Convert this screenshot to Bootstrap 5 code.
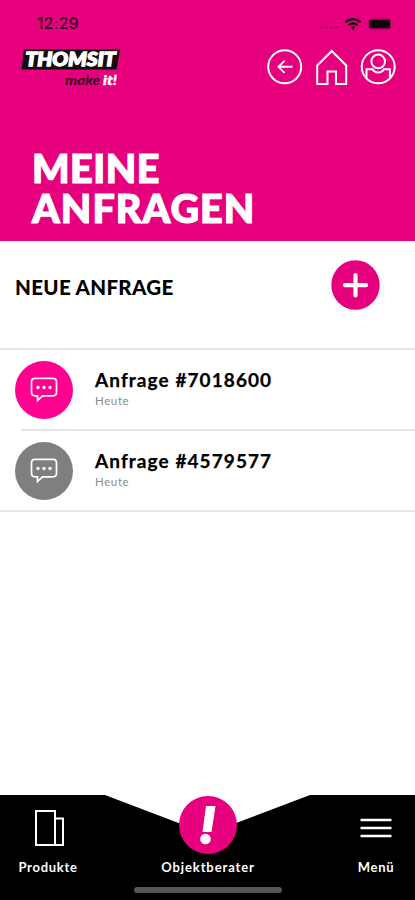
<!DOCTYPE html>
<html lang="de">
<head>
<meta charset="utf-8">
<meta name="viewport" content="width=device-width, initial-scale=1">
<title>Meine Anfragen</title>
<link href="https://cdn.jsdelivr.net/npm/bootstrap@5.3.0/dist/css/bootstrap.min.css" rel="stylesheet">
<style>
:root { --brand: #e6007e; }
body { font-family: Lato, "Liberation Sans", sans-serif; color: #000; }
svg { display: block; flex: none; }
.app { height: 900px; max-width: 415px; }
.hero { height: 241px; background: var(--brand); }
.statusbar { height: 44px; padding: 3px 20px 0 37px; }
.clock { font: 500 15.5px/1 Inter, sans-serif; color: #35001f; letter-spacing: .35px; }
.brandbar { height: 45px; padding: 0 18px 0 20px; }
.hero-title { font-size: 39.5px; line-height: 39.5px; font-weight: 900; padding: 59px 0 0 32px; -webkit-text-stroke: 1.2px #fff; }
.t1 { letter-spacing: .5px; }
.t2 { letter-spacing: 1.05px; }
.new-request { height: 107px; padding: 19px 35px 0 15px; }
.new-title { font-size: 20.5px; line-height: 24px; font-weight: 900; padding-top: 15px; letter-spacing: .33px; }
.request { height: 81px; padding-left: 15px; }
.request-older { padding-top: 2px; }
.rule { border-top: 2px solid #e6e6e6; }
.rule-inset { position: absolute; top: 0; left: 21px; right: 0; }
.bubble { width: 58px; height: 58px; background: #7f7f7f; }
.bubble-new { background: #ff0090; }
.request-text { margin-left: 22px; padding-bottom: 3px; }
.request-name { font-size: 19px; line-height: 22px; font-weight: 700; letter-spacing: 1.08px; -webkit-text-stroke: .25px #000; }
.request-day { font-size: 11.5px; line-height: 14px; color: #8c8c8c; letter-spacing: .6px; margin-top: 3px; }
.tabbar { height: 105px; }
.tabbar-shape { position: absolute; inset: 0; }
.tabs { padding: 0 1px 0 10px; }
.tab { color: #fff; font-size: 13px; line-height: 16px; font-weight: 700; padding-bottom: 25px; letter-spacing: .7px; }
.tab-side { width: 76px; }
.tab-main { margin-right: 8px; letter-spacing: .9px; }
.tab svg { margin-bottom: 12px; }
.tab-main svg { margin-bottom: 4px; }
.home-indicator { position: absolute; left: 134px; bottom: 7px; width: 148px; height: 6px; background: #555; }
</style>
</head>
<body>
<div class="app d-flex flex-column bg-white position-relative overflow-hidden">
  <header class="hero text-white">
    <div class="statusbar d-flex align-items-center justify-content-between">
      <span class="clock">12:29</span>
      <svg width="78" height="16" viewBox="0 0 78 16">
        <g fill="#8f0050" opacity=".7"><rect x="3" y="10.500" width="3" height="2"/><rect x="8" y="10.500" width="3" height="2"/><rect x="13" y="10.500" width="3" height="2"/><rect x="18" y="10.500" width="3" height="2"/></g>
        <g fill="none" stroke="#16000c" stroke-width="2.200"><path d="M28.500 6.200a10.600 10.600 0 0 1 15 0"/><path d="M31.500 9.200a6.400 6.400 0 0 1 9 0"/></g>
        <path d="M33.600 11.200a3.600 3.600 0 0 1 4.800 0L36 14z" fill="#16000c"/>
        <rect x="52" y="3.200" width="21.500" height="9.600" rx="2" fill="#16000c" stroke="#9c0058"/>
        <path d="M75 6.200q2 1.800 0 3.600z" fill="#9c0058"/>
      </svg>
    </div>
    <div class="brandbar d-flex align-items-center justify-content-between">
      <svg width="102" height="44" viewBox="0 0 102 44" font-family="Lato, sans-serif" font-style="italic">
        <path d="M4 4.500H100L96.500 24.500H1.500z" fill="#120a0e"/>
        <text x="5.500" y="20.500" font-size="18" font-weight="900" fill="#fff" stroke="#fff" stroke-width="1.300" textLength="90" lengthAdjust="spacingAndGlyphs">THOMSIT</text>
        <text x="45" y="39.500" font-size="13" font-weight="700" fill="#30001b" textLength="35" lengthAdjust="spacingAndGlyphs">make</text>
        <text x="83" y="39.500" font-size="14" font-weight="900" fill="#fff" stroke="#fff" stroke-width=".4" textLength="14" lengthAdjust="spacingAndGlyphs">it!</text>
      </svg>
      <svg width="130" height="38" viewBox="0 0 130 38" fill="none" stroke="#fff" stroke-width="2">
        <circle cx="17.700" cy="18.800" r="16.500"/>
        <path d="M25.500 18.800H12M17.500 12.800l-6 6 6 6" stroke-width="1.900"/>
        <path d="M50.200 36V17.500L64.700 3l14.500 14.500V36H69V23.500h-8.500V36z"/>
        <circle cx="111.200" cy="18.800" r="16.500"/>
        <circle cx="111.200" cy="13.400" r="6.800"/>
        <path d="M99.500 29.500V21.200h6q2 3.300 5.700 3.300t5.700-3.300h6v8.300"/>
      </svg>
    </div>
    <h1 class="hero-title mb-0"><span class="t1">MEINE</span><br><span class="t2">ANFRAGEN</span></h1>
  </header>

  <section class="new-request d-flex align-items-start justify-content-between">
    <h2 class="new-title mb-0">NEUE ANFRAGE</h2>
    <svg width="49" height="50" viewBox="0 0 49 50"><ellipse cx="24.500" cy="25" rx="24.200" ry="24.800" fill="#e6007e"/><path d="M24.500 15v20.500M14 25.200h21" stroke="#fff" stroke-width="4.200" stroke-linecap="round"/></svg>
  </section>

  <main class="flex-grow-1">
    <div class="request rule d-flex align-items-center">
      <div class="bubble bubble-new rounded-circle d-flex align-items-center justify-content-center">
        <svg width="28" height="28" viewBox="0 0 28 28"><path d="M5 2.300h18q3.500 0 3.500 3.500v10.500q0 3.500-3.500 3.500H12.500L7.500 24.500v-4.700H5q-3.500 0-3.500-3.500V5.800q0-3.500 3.500-3.500z" fill="none" stroke="#fff" stroke-width="1.700"/><g fill="#fff"><circle cx="8" cy="11.500" r="1.700"/><circle cx="14" cy="11.500" r="1.700"/><circle cx="20" cy="11.500" r="1.700"/></g></svg>
      </div>
      <div class="request-text"><div class="request-name">Anfrage #7018600</div><div class="request-day">Heute</div></div>
    </div>
    <div class="request request-older position-relative d-flex align-items-center">
      <div class="rule rule-inset"></div>
      <div class="bubble rounded-circle d-flex align-items-center justify-content-center">
        <svg width="28" height="28" viewBox="0 0 28 28"><path d="M5 2.300h18q3.500 0 3.500 3.500v10.500q0 3.500-3.500 3.500H12.500L7.500 24.500v-4.700H5q-3.500 0-3.500-3.500V5.800q0-3.500 3.500-3.500z" fill="none" stroke="#fff" stroke-width="1.700"/><g fill="#fff"><circle cx="8" cy="11.500" r="1.700"/><circle cx="14" cy="11.500" r="1.700"/><circle cx="20" cy="11.500" r="1.700"/></g></svg>
      </div>
      <div class="request-text"><div class="request-name">Anfrage #4579577</div><div class="request-day">Heute</div></div>
    </div>
    <div class="rule"></div>
  </main>

  <nav class="tabbar position-relative d-flex">
    <svg class="tabbar-shape" width="415" height="105" viewBox="0 0 415 105"><path d="M0 0H105L207.500 39 310 0H415V105H0z"/></svg>
    <div class="tabs d-flex w-100 justify-content-between align-items-end position-relative">
      <div class="tab tab-side d-flex flex-column align-items-center">
        <svg width="32" height="38" viewBox="0 0 32 38" fill="none" stroke="#fff" stroke-width="2"><path d="M4 2h19v34H4zM23 9.500h8V36h-8"/></svg>
        <span>Produkte</span>
      </div>
      <div class="tab tab-main d-flex flex-column align-items-center">
        <svg width="58" height="60" viewBox="0 0 58 60"><circle cx="29" cy="30" r="29" fill="#e6007e"/><path d="M27 11h9.500L32.500 37h-9z" fill="#fff"/><circle cx="26.500" cy="44" r="5.300" fill="#fff"/></svg>
        <span>Objektberater</span>
      </div>
      <div class="tab tab-side d-flex flex-column align-items-center">
        <svg width="32" height="38" viewBox="0 0 32 38" stroke="#fff" stroke-width="2.500"><path d="M.5 11h31M.5 19h31M.5 27h31"/></svg>
        <span>Menü</span>
      </div>
    </div>
    <div class="home-indicator rounded-pill"></div>
  </nav>
</div>
<script src="https://cdn.jsdelivr.net/npm/bootstrap@5.3.0/dist/js/bootstrap.bundle.min.js"></script>
</body>
</html>
